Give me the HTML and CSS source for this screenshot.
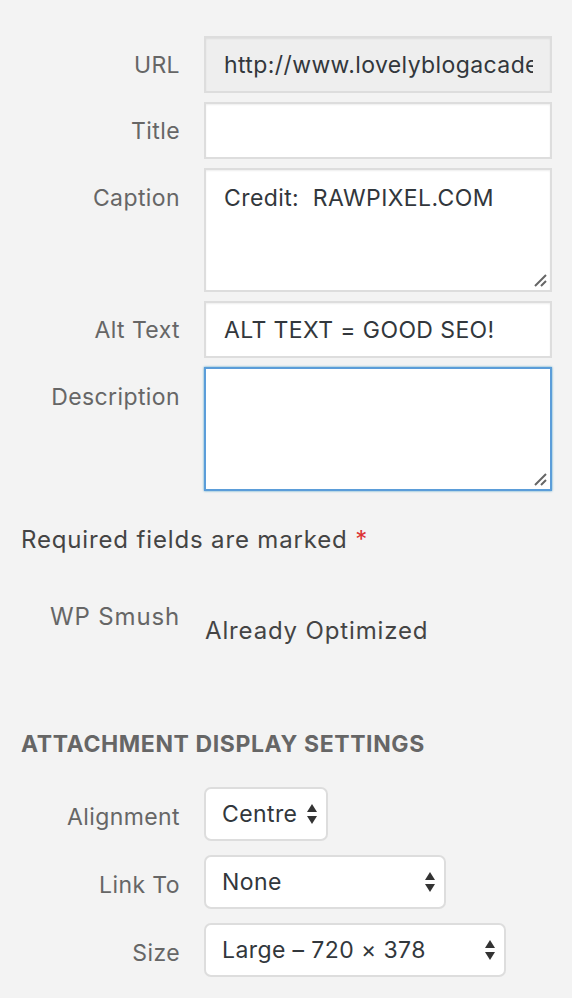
FILE: index.html
```html
<!DOCTYPE html>
<html lang="en">
<head>
<meta charset="utf-8">
<meta name="viewport" content="width=device-width, initial-scale=1.0">
<title>Attachment Details</title>
<link rel="stylesheet" href="styles.css">
</head>
<body>
<div class="sidebar">

  <!-- attachment fields -->
  <div class="row">
    <label class="label">URL</label>
    <div class="field readonly"><span class="clip">http://www.lovelyblogacademy.com/wp-content/uploads/alt-text.jpg</span></div>
  </div>
  <div class="row">
    <label class="label">Title</label>
    <div class="field"></div>
  </div>
  <div class="row">
    <label class="label top">Caption</label>
    <div class="field area">Credit:&nbsp; RAWPIXEL.COM
      <svg class="grip" width="14" height="14" viewBox="0 0 14 14"><path d="M13 2 L2 13 M13 8 L8 13" stroke="#666" stroke-width="2" fill="none"/></svg>
    </div>
  </div>
  <div class="row">
    <label class="label">Alt Text</label>
    <div class="field">ALT TEXT = GOOD SEO!</div>
  </div>
  <div class="row">
    <label class="label top">Description</label>
    <div class="field area focus">
      <svg class="grip" width="14" height="14" viewBox="0 0 14 14"><path d="M13 2 L2 13 M13 8 L8 13" stroke="#666" stroke-width="2" fill="none"/></svg>
    </div>
  </div>

  <p class="required">Required fields are marked <span class="star">*</span></p>

  <div class="row smush">
    <span class="label">WP Smush</span>
    <span class="status">Already Optimized</span>
  </div>

  <h2 class="heading">Attachment Display Settings</h2>

  <div class="row">
    <label class="label">Alignment</label>
    <div class="select w-align">Centre
      <svg class="arrows" width="12" height="22" viewBox="0 0 12 22"><path d="M6 1 L11 9 L1 9 Z M1 13 L11 13 L6 21 Z" fill="#333"/></svg>
    </div>
  </div>
  <div class="row">
    <label class="label">Link To</label>
    <div class="select w-link">None
      <svg class="arrows" width="12" height="22" viewBox="0 0 12 22"><path d="M6 1 L11 9 L1 9 Z M1 13 L11 13 L6 21 Z" fill="#333"/></svg>
    </div>
  </div>
  <div class="row">
    <label class="label">Size</label>
    <div class="select w-size">Large &ndash; 720 &times; 378
      <svg class="arrows" width="12" height="22" viewBox="0 0 12 22"><path d="M6 1 L11 9 L1 9 Z M1 13 L11 13 L6 21 Z" fill="#333"/></svg>
    </div>
  </div>

</div>
</body>
</html>
```

FILE: styles.css
```css
/* WP media sidebar, shown at 2x */
body {
  margin: 0;
  background-color: #f3f3f3;
  font-family: Inter, "Open Sans", sans-serif;
  font-size: 23px;
  letter-spacing: 0.4px;
  color: #444;
}

.sidebar {
  padding: 36px 20px 20px 21px;
}

.row {
  display: flex;
  align-items: center;
  gap: 24px;
  margin-bottom: 9px;
}

.label {
  flex: 0 0 159px;
  text-align: right;
  color: #666;
}

.label.top {
  align-self: flex-start;
  padding-top: 16px;
}

.field {
  position: relative;
  flex: 1;
  min-width: 0;
  box-sizing: border-box;
  height: 57px;
  padding: 0 17px 0 18px;
  display: flex;
  align-items: center;
  background: #fff;
  border: 2px solid #ddd;
  box-shadow: inset 0 1px 2px rgba(0,0,0,0.07);
  color: #32373c;
  white-space: nowrap;
}

.clip {
  flex: 1;
  min-width: 0;
  overflow: hidden;
  white-space: nowrap;
}

.field.readonly {
  background: #eee;
}

.field.area {
  height: 124px;
  align-items: flex-start;
  padding-top: 14px;
}

.field.focus {
  border-color: #5b9dd9;
  box-shadow: 0 0 2px rgba(30,140,190,0.8);
}

.grip {
  position: absolute;
  right: 3px;
  bottom: 3px;
}

.required {
  margin: 34px 0 0;
  line-height: 30px;
  font-size: 24px;
  letter-spacing: 0.85px;
  color: #444;
}

.star {
  color: #dc3232;
}

.smush {
  margin-top: 47px;
  align-items: flex-start;
  font-size: 24px;
  letter-spacing: 0.85px;
}

.status {
  padding-top: 14px;
  margin-left: 1px;
  color: #444;
}

.heading {
  margin: 85px 0 29px;
  font-size: 23px;
  letter-spacing: 0.6px;
  font-weight: 700;
  text-transform: uppercase;
  color: #666;
}

.select {
  box-sizing: border-box;
  height: 54px;
  padding: 0 8px 0 16px;
  display: flex;
  align-items: center;
  justify-content: space-between;
  background: #fff;
  border: 2px solid #ddd;
  border-radius: 7px;
  color: #32373c;
  margin-bottom: 5px;
}

.w-align { width: 124px; }
.w-link { width: 242px; }
.w-size { width: 302px; }
```
